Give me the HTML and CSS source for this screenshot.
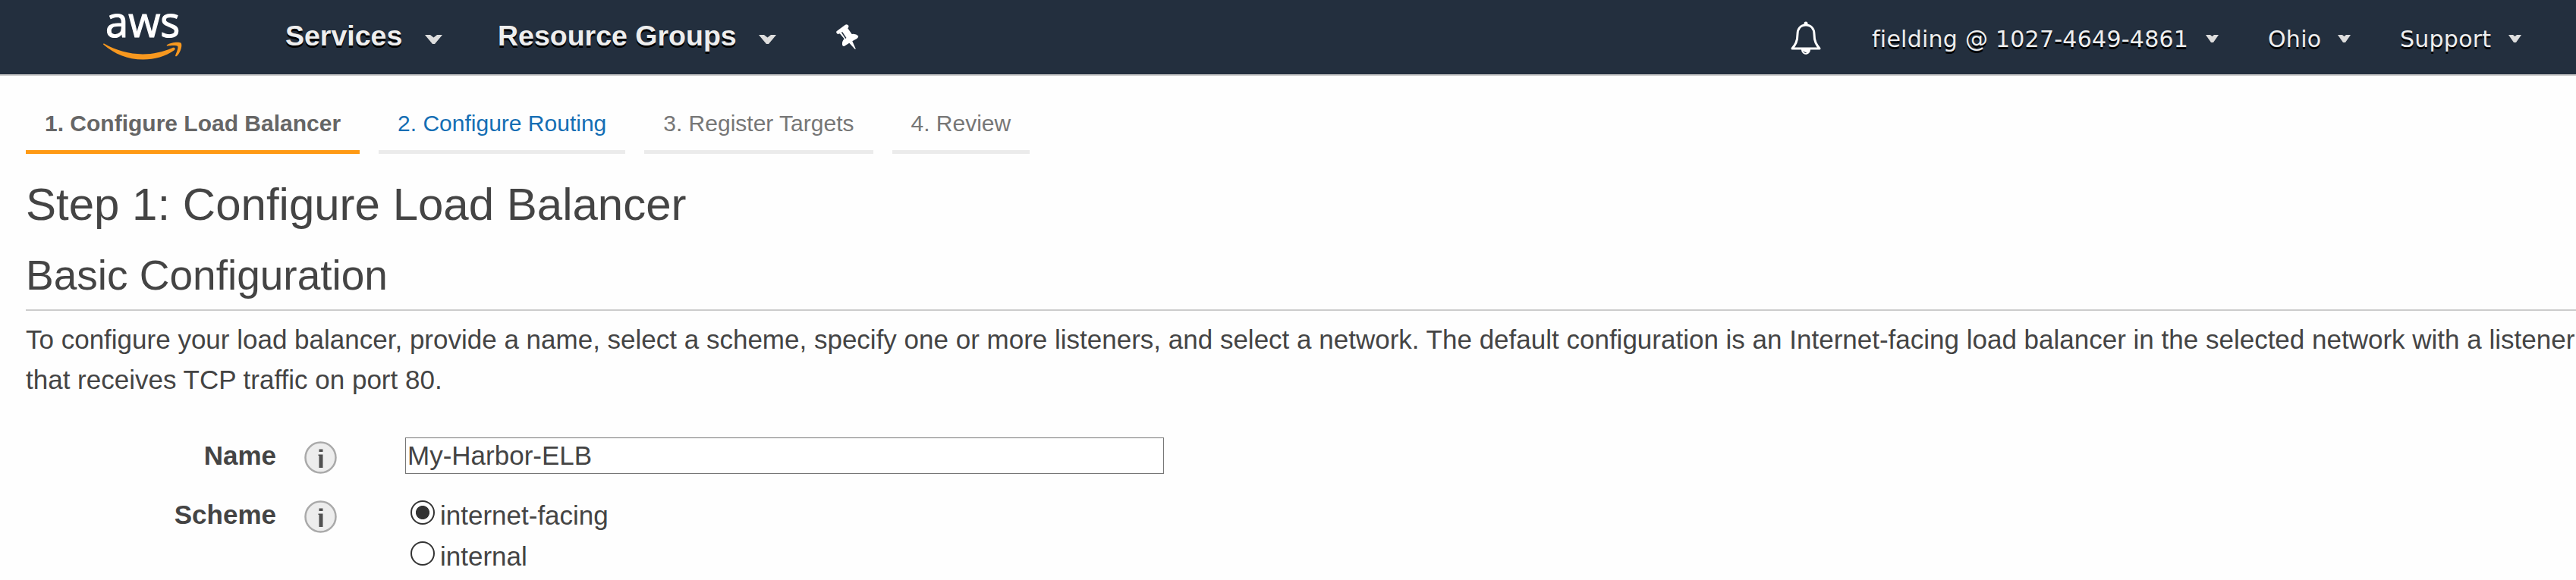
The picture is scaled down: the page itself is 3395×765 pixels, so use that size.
FILE: index.html
```html
<!DOCTYPE html>
<html lang="en">
<head>
<meta charset="utf-8">
<title>Configure Load Balancer</title>
<link rel="stylesheet" href="styles.css">
</head>
<body>
<header class="nav">
  <svg class="logo" width="108" height="82" viewBox="0 -16 108 82" role="img" aria-label="aws">
    <text class="logo-text" x="3" y="32.500" textLength="98" lengthAdjust="spacingAndGlyphs">aws</text>
    <path fill="#f7981f" d="M1.2 41.6C17 50.6 34 55.4 52 55.4C66 55.4 78 52.600 91 47.200C94.400 45.600 96.200 48.600 93.300 50.600C82 58.500 68 62.500 52.600 62.500C32 62.500 14.500 55 .6 43C-.4 42 0 40.900 1.200 41.600Z"/>
    <path fill="#f7981f" d="M84 43.200C88.500 39.900 99.500 38.800 102.300 40.500C104.900 42.500 102.300 53.500 97 57.900C95.800 58.800 94.700 58.200 95.200 56.900C97 52.500 99.300 46.500 98.100 44.900C96.700 43.400 89 44 85 44.500C83.700 44.600 83.300 43.800 84 43.200Z"/>
  </svg>
  <a class="menu services">Services<svg class="caret" viewBox="0 0 23 12"><path d="M0 0H7L11.500 3.500L16 0H23L13 12H10Z"/></svg></a>
  <a class="menu groups">Resource Groups<svg class="caret" viewBox="0 0 23 12"><path d="M0 0H7L11.500 3.500L16 0H23L13 12H10Z"/></svg></a>
  <svg class="pin" width="30" height="34" viewBox="0 0 30 34"><path fill="#fff" d="M.5 9.300L12 .8Q14.500-.6 16.300 1.800Q17 4 15.300 5.300L20.700 13Q26 12.200 29.300 15.500Q29.500 17.500 27.300 18.900L21.300 22.300L25.700 32.300Q25.300 33.400 24.400 32.500L17.300 24.700L11 28.800Q8.500 29.500 8 27C7.600 23.500 8.800 21 10.700 19.200L4.800 12.200Q2.500 13.500 1 12.200Q-.5 10.500 .5 9.300Z"/><path d="M7.500 10.300L12.900 18.500" stroke="#232f3e" stroke-width="1.500"/></svg>
  <svg class="bell" width="40" height="44" viewBox="0 0 40 44"><circle cx="20" cy="3" r="2.500" fill="#fff"/><path d="M20 5C13 5 9 10 9 17C9 27 6 31 2 36H38C34 31 31 27 31 17C31 10 27 5 20 5Z" fill="none" stroke="#fff" stroke-width="3" stroke-linejoin="round"/><path d="M14 37C14 46 26 46 26 37Z" fill="#fff"/><path d="M17 39.500Q18 42 20.500 41.500" fill="none" stroke="#232f3e" stroke-width="1"/></svg>
  <a class="user account">fielding @ 1027-4649-4861<svg class="caret" viewBox="0 0 17 10"><path d="M0 0H6L8.500 2L11 0H17L10 10H7Z"/></svg></a>
  <a class="user region">Ohio<svg class="caret" viewBox="0 0 17 10"><path d="M0 0H6L8.500 2L11 0H17L10 10H7Z"/></svg></a>
  <a class="user support">Support<svg class="caret" viewBox="0 0 17 10"><path d="M0 0H6L8.500 2L11 0H17L10 10H7Z"/></svg></a>
</header>
<main class="page">
  <nav class="steps">
    <span class="step current">1. Configure Load Balancer</span>
    <a class="step next">2. Configure Routing</a>
    <span class="step">3. Register Targets</span>
    <span class="step">4. Review</span>
  </nav>
  <h1>Step 1: Configure Load Balancer</h1>
  <h2>Basic Configuration</h2>
  <p class="intro">To configure your load balancer, provide a name, select a scheme, specify one or more listeners, and select a network. The default configuration is an Internet-facing load balancer in the selected network with a listener<br>that receives TCP traffic on port 80.</p>
  <form class="form">
    <div class="row">
      <label class="label" for="name">Name</label>
      <svg class="info" width="43" height="43" viewBox="0 0 43 43"><circle cx="21.500" cy="21.500" r="20" fill="#ededed" stroke="#aaa" stroke-width="2.500"/><path fill="#505050" d="M19.500 10.500h5v3.500h-5zM18.500 17.500h6V35h-5V19h-1z"/></svg>
      <input id="name" class="input" type="text" value="My-Harbor-ELB">
    </div>
    <div class="row scheme">
      <span class="label">Scheme</span>
      <svg class="info" width="43" height="43" viewBox="0 0 43 43"><circle cx="21.500" cy="21.500" r="20" fill="#ededed" stroke="#aaa" stroke-width="2.500"/><path fill="#505050" d="M19.500 10.500h5v3.500h-5zM18.500 17.500h6V35h-5V19h-1z"/></svg>
      <div class="options">
        <label class="option"><input class="radio" type="radio" name="scheme" checked>internet-facing</label>
        <label class="option"><input class="radio" type="radio" name="scheme">internal</label>
      </div>
    </div>
  </form>
</main>
</body>
</html>
```
FILE: styles.css
```css
* { box-sizing: border-box; }
body {
  margin: 0;
  height: 765px;
  overflow: hidden;
  background: #fefefe;
  color: #444;
  font-family: "Liberation Sans", Arial, sans-serif;
  font-size: 35px;
}
svg { display: block; flex: none; overflow: visible; }
.nav {
  display: flex;
  align-items: flex-start;
  height: 100px;
  background: #232f3e;
  border-bottom: 2px solid #ccc;
  white-space: nowrap;
}
.logo { margin-left: 136px; }
.logo-text { font: 400 56px "Open Sans", "Noto Sans", sans-serif; fill: #fff; stroke: #fff; stroke-width: 1.2px; }
.menu, .user {
  display: flex;
  justify-content: space-between;
  flex: none;
  color: #eee;
  text-shadow: 0 2.5px 0 #000;
}
.menu { font-size: 37.5px; font-weight: bold; line-height: 95px; }
.menu .caret { width: 23px; height: 12px; margin-top: 46px; }
.caret { fill: #ddd; }
.services { width: 207px; margin-left: 132px; }
.groups { width: 367px; margin-left: 73px; }
.pin { margin: 32px 0 0 79px; }
.bell { margin: 28px 0 0 auto; }
.user { font: 30px/104px "DejaVu Sans", Verdana, sans-serif; letter-spacing: .25px; }
.user .caret { width: 17px; height: 10px; margin-top: 46px; }
.account { width: 457px; margin-left: 67px; }
.region { width: 109px; margin-left: 65px; }
.support { width: 160px; margin: 0 72px 0 65px; }

.page { padding-left: 34px; }
.steps { display: flex; gap: 25px; height: 103px; }
.step {
  padding: 38px 25px 0;
  border-bottom: 5px solid #ebebeb;
  color: #777;
  font-size: 30px;
  line-height: 50px;
  white-space: nowrap;
}
.current { border-color: #ff9a14; color: #666; font-weight: bold; }
.next { color: #146eb4; }
h1 { margin: 32px 0 0; font-size: 60px; font-weight: normal; line-height: 70px; }
h2 {
  height: 98px;
  margin: 7px 0 0;
  padding-top: 19px;
  border-bottom: 2px solid #ccc;
  font-size: 55px;
  font-weight: normal;
  line-height: 64px;
}
.intro { margin: 12px 0 0; line-height: 52.5px; white-space: nowrap; }
.form { margin-top: 50px; }
.row { display: flex; align-items: flex-start; height: 78px; }
.label { width: 330px; text-align: right; font-weight: bold; line-height: 48px; }
.info { margin: 5px 0 0 37px; }
.input {
  width: 1000px;
  height: 48px;
  margin-left: 90px;
  padding: 0 2px;
  border: 1px solid #767676;
  background: #fff;
  color: #444;
  font: 35px "Liberation Sans", Arial, sans-serif;
}
.options { margin: -1px 0 0 97px; }
.option { display: flex; height: 54px; line-height: 52px; }
.radio {
  appearance: none;
  width: 32px;
  height: 32px;
  margin: 6px 7px 0 0;
  border: 2px solid #333;
  border-radius: 50%;
  background: #fff;
}
.radio:checked { background: radial-gradient(circle, #333 8.6px, #fff 9.4px); }
```
